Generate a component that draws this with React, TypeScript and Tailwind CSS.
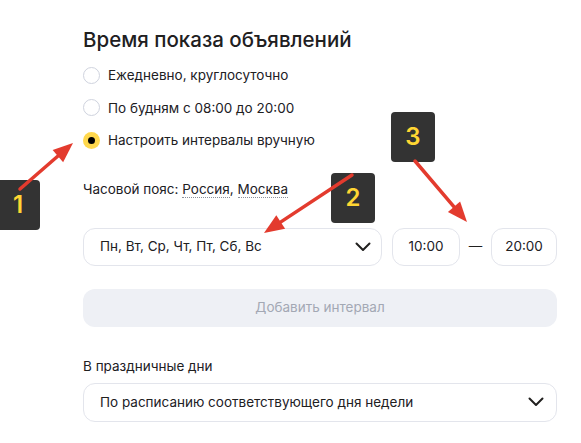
import React from 'react'

const font = { fontFamily: 'Inter, "Noto Sans", sans-serif' }

function Radio({ label, checked }: { label: string; checked?: boolean }) {
  return (
    <label className="flex h-[32.5px] items-center gap-[8px]">
      {checked ? (
        <span className="flex h-[17px] w-[17px] items-center justify-center rounded-full bg-[#ffd84d]">
          <span className="h-[7px] w-[7px] rounded-full bg-black" />
        </span>
      ) : (
        <span className="h-[17px] w-[17px] rounded-full border border-[#cfd3de] bg-white" />
      )}
      <span className="text-[13.5px] text-[#21201f]">{label}</span>
    </label>
  )
}

function Chevron() {
  return (
    <svg width="16" height="10" viewBox="0 0 16 10" fill="none">
      <path d="M1.5 1.5 8 8l6.5-6.5" stroke="#21201f" strokeWidth="2" strokeLinecap="round" strokeLinejoin="round" />
    </svg>
  )
}

function Badge({ n, className }: { n: string; className: string }) {
  return (
    <div className={`absolute flex h-[50px] w-[44px] items-center justify-center rounded-[4px] bg-[#333333] text-[24px] font-semibold text-[#ffd633] ${className}`}>
      {n}
    </div>
  )
}

function Arrow({ x1, y1, x2, y2 }: { x1: number; y1: number; x2: number; y2: number }) {
  const dx = x2 - x1
  const dy = y2 - y1
  const len = Math.hypot(dx, dy)
  const ux = dx / len
  const uy = dy / len
  const head = 20
  const half = 8
  const bx = x2 - ux * head
  const by = y2 - uy * head
  const pts = `${x2},${y2} ${bx - uy * half},${by + ux * half} ${bx + uy * half},${by - ux * half}`
  return (
    <g>
      <line x1={x1} y1={y1} x2={bx + ux * 2} y2={by + uy * 2} stroke="#e33b2e" strokeWidth="3.5" strokeLinecap="round" />
      <polygon points={pts} fill="#e33b2e" />
    </g>
  )
}

export default function App() {
  return (
    <div className="relative h-[443px] w-[581px] overflow-hidden bg-white" style={font}>
      <div className="w-[557px] pl-[83px] pt-[27px]">
        <h1 className="text-[20.5px] leading-[26px] font-medium text-[#21201f]">Время показа объявлений</h1>
        <div className="mt-[6px] flex flex-col">
          <Radio label="Ежедневно, круглосуточно" />
          <Radio label="По будням с 08:00 до 20:00" />
          <Radio label="Настроить интервалы вручную" checked />
        </div>
        <div className="mt-[22px] text-[13.5px] leading-[20px] text-[#21201f]">
          Часовой пояс:{' '}
          <span className="border-b border-dotted border-[#8a8f9a]">Россия</span>,{' '}
          <span className="border-b border-dotted border-[#8a8f9a]">Москва</span>
        </div>
        <div className="mt-[29px] flex items-center">
          <div className="flex h-[38px] w-[299px] items-center justify-between rounded-[12px] border border-[#e3e5ec] pl-[16px] pr-[10px]">
            <span className="text-[13.5px] text-[#21201f]">Пн, Вт, Ср, Чт, Пт, Сб, Вс</span>
            <Chevron />
          </div>
          <div className="ml-[10px] flex h-[38px] w-[68px] items-center justify-center rounded-[12px] border border-[#e3e5ec] text-[13.5px] text-[#21201f]">
            10:00
          </div>
          <span className="w-[31px] text-center text-[13.5px] text-[#21201f]">—</span>
          <div className="flex h-[38px] w-[66px] items-center justify-center rounded-[12px] border border-[#e3e5ec] text-[13.5px] text-[#21201f]">
            20:00
          </div>
        </div>
        <div className="mt-[23px] flex h-[38px] items-center justify-center rounded-[12px] bg-[#eef0f5] text-[13.5px] text-[#a3a8b4]">
          Добавить интервал
        </div>
        <div className="mt-[29px] text-[13.5px] leading-[20px] text-[#21201f]">В праздничные дни</div>
        <div className="mt-[7px] flex h-[39px] items-center justify-between rounded-[12px] border border-[#e3e5ec] pl-[16px] pr-[12px]">
          <span className="text-[13.5px] text-[#21201f]">По расписанию соответствующего дня недели</span>
          <Chevron />
        </div>
      </div>

      <Badge n="1" className="left-[-4px] top-[180px]" />
      <Badge n="2" className="left-[331px] top-[173px]" />
      <Badge n="3" className="left-[391px] top-[112px]" />

      <svg className="pointer-events-none absolute left-0 top-0" width="581" height="443">
        <Arrow x1={20} y1={189} x2={73} y2={143} />
        <Arrow x1={352} y1={175} x2={264} y2={233} />
        <Arrow x1={415} y1={161} x2={467} y2={222} />
      </svg>
    </div>
  )
}
